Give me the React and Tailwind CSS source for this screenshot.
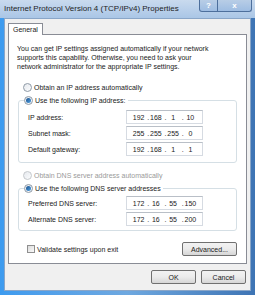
const font = { fontFamily: '"Liberation Sans", Arial, sans-serif' };

function Radio({ checked, disabled, label }) {
  return (
    <div className={`flex items-center gap-[2px] ${disabled ? "text-[#9a9a9a]" : "text-[#1a1a1a]"}`}>
      <span className={`w-[9px] h-[9px] rounded-full border ${disabled ? "border-[#c4c8cc]" : "border-[#8f9aa6]"} bg-gradient-to-br from-[#e6e9ee] to-[#fbfcfd] flex items-center justify-center`}>
        {checked && <span className="w-[5px] h-[5px] rounded-full bg-gradient-to-br from-[#1b4f8a] to-[#4fa3e6]" />}
      </span>
      <span>{label}</span>
    </div>
  );
}

function Field({ label, value }) {
  const parts = value.split(".");
  return (
    <div className="flex items-center h-[16px]">
      <span className="w-[107px] pl-[9px]">{label}</span>
      <div className="w-[77px] h-[14px] bg-white border border-[#d6dbe2] border-t-[#b9bfc7] flex items-center px-[3px]">
        {parts.map((p, i) => (
          <span key={i} className="flex-1 flex justify-center relative">
            {p}
            {i < 3 && <span className="absolute right-[-2px]">.</span>}
          </span>
        ))}
      </div>
    </div>
  );
}

function Button({ children, w }) {
  return (
    <div className={`${w} h-[14px] rounded-[2px] border border-[#707070] bg-gradient-to-b from-[#f2f2f2] via-[#ebebeb] to-[#d6d6d6] flex items-center justify-center text-[#1a1a1a]`}>
      {children}
    </div>
  );
}

export default function App() {
  return (
    <div style={font} className="w-[255px] h-[295px] overflow-hidden bg-gradient-to-r from-[#3d9bef] via-[#6ea8e0] to-[#3e74b4] flex flex-col text-[7px] leading-[9px]">
      <div className="h-[18px] shrink-0 flex items-start bg-gradient-to-b from-[#c9daee] to-[#aac6e6]">
        <span className="pl-[4px] pt-[4px] text-[8px] leading-[10px] text-[#1e1e1e]">Internet Protocol Version 4 (TCP/IPv4) Properties</span>
        <div className="ml-auto mr-[3px] flex">
          <div className="w-[19px] h-[12px] rounded-bl-[3px] border border-t-0 border-[#4d6f9c] bg-gradient-to-b from-[#b8cde6] to-[#9ebde2] flex items-center justify-center text-white font-bold text-[8px]">?</div>
          <div className="w-[34px] h-[12px] rounded-br-[3px] border border-t-0 border-l-0 border-[#4d6f9c] bg-gradient-to-b from-[#b8cde6] to-[#9ebde2] flex items-center justify-center text-white font-bold text-[8px]">x</div>
        </div>
      </div>
      <div className="flex-1 mx-[4px] mb-[4px] bg-[#f0f0f0] border border-[#8aa6c8] flex flex-col px-[3px] pt-[3px]">
        <div className="flex">
          <div className="h-[12px] px-[4px] border border-b-0 border-[#898c95] bg-white flex items-center text-[#1a1a1a] relative top-[1px]">General</div>
        </div>
        <div className="bg-white border border-[#898c95] flex flex-col pt-[9px] pb-[7px] px-[8px] text-[#1a1a1a]">
          <p className="w-[200px]">You can get IP settings assigned automatically if your network supports this capability. Otherwise, you need to ask your network administrator for the appropriate IP settings.</p>
          <div className="mt-[12px] pl-[6px]">
            <Radio label="Obtain an IP address automatically" />
          </div>
          <div className="mt-[8px] border border-[#d5dfe5] rounded-[3px] pb-[5px] relative pt-[8px] mx-[1px]">
            <div className="absolute left-[5px] top-[-5px] bg-white pr-[2px]">
              <Radio checked label="Use the following IP address:" />
            </div>
            <Field label="IP address:" value="192.168.1.10" />
            <Field label="Subnet mask:" value="255.255.255.0" />
            <Field label="Default gateway:" value="192.168.1.1" />
          </div>
          <div className="mt-[8px] pl-[6px]">
            <Radio disabled label="Obtain DNS server address automatically" />
          </div>
          <div className="mt-[8px] border border-[#d5dfe5] rounded-[3px] pb-[3px] relative pt-[6px] mx-[1px]">
            <div className="absolute left-[5px] top-[-5px] bg-white pr-[2px]">
              <Radio checked label="Use the following DNS server addresses" />
            </div>
            <Field label="Preferred DNS server:" value="172.16.55.150" />
            <Field label="Alternate DNS server:" value="172.16.55.200" />
          </div>
          <div className="mt-[11px] flex items-center pl-[10px] pr-[1px]">
            <span className="w-[8px] h-[8px] border border-[#8f8f8f] bg-gradient-to-br from-[#dcdcdc] to-[#fafafa]" />
            <span className="ml-[2px]">Validate settings upon exit</span>
            <div className="ml-auto">
              <Button w="w-[55px]">Advanced...</Button>
            </div>
          </div>
        </div>
        <div className="flex justify-end gap-[5px] mt-[6px] pr-[1px]">
          <Button w="w-[45px]">OK</Button>
          <Button w="w-[45px]">Cancel</Button>
        </div>
      </div>
    </div>
  );
}
